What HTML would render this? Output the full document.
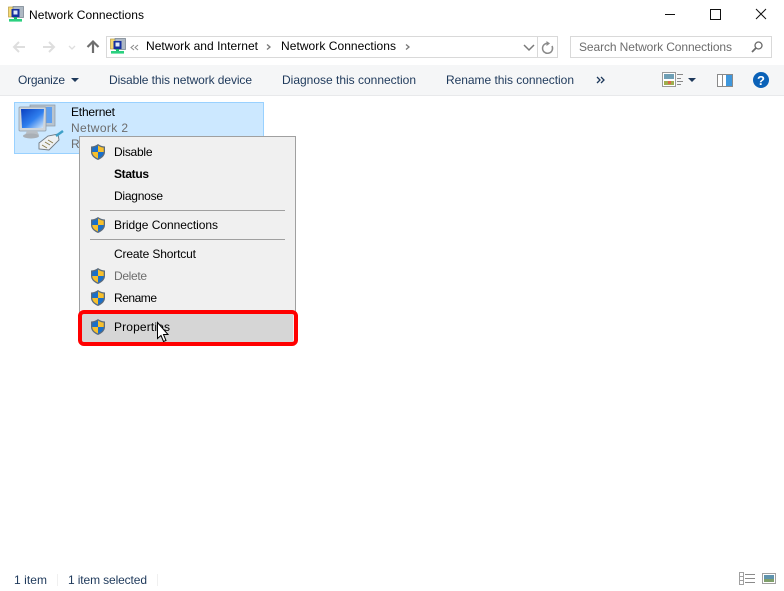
<!DOCTYPE html>
<html><head><meta charset="utf-8"><title>Network Connections</title>
<style>
html,body{margin:0;padding:0;background:#fff;width:784px;height:591px;overflow:hidden}
svg{display:block}
text{font-family:"Liberation Sans",sans-serif;font-size:12px;fill:#000}
.t{fill:#1e395b}
</style></head><body>
<svg width="784" height="591" viewBox="0 0 784 591" xmlns="http://www.w3.org/2000/svg">
<defs>
<linearGradient id="scr" x1="0" y1="0" x2="1" y2="1"><stop offset="0" stop-color="#0a3fc0"/><stop offset=".55" stop-color="#2f7fee"/><stop offset="1" stop-color="#d8ecfc"/></linearGradient>
<g id="shield">
<path d="M7 0C5 1.600 3 2.300 0 2.500V8C0 11.800 3.200 14.500 7 16 10.800 14.500 14 11.800 14 8V2.500C11 2.300 9 1.600 7 0Z" fill="#5b6b7c"/>
<path d="M7 1.500V8H1.300V3.600C3.800 3.400 5.500 2.700 7 1.500Z" fill="#1a6fc9"/>
<path d="M7 1.500C8.500 2.700 10.200 3.400 12.700 3.600V8H7Z" fill="#f7c02c"/>
<path d="M1.300 8H7V14.500C4 13.200 1.300 11.200 1.300 8Z" fill="#f7c02c"/>
<path d="M7 8H12.700C12.700 11.200 10 13.200 7 14.500Z" fill="#1a6fc9"/>
</g>
<g id="net">
<rect x="0.500" y="1" width="7" height="10" fill="#f6d970" stroke="#b59a45" stroke-width=".7"/>
<rect x="5" y="0.500" width="10.500" height="11" fill="#aeb9c4" stroke="#6f7c89" stroke-width=".7"/>
<rect x="3.500" y="3" width="8" height="8" fill="#16309f"/>
<rect x="5.500" y="4.500" width="4" height="4" fill="#dfe8f7"/>
<rect x="6" y="11" width="3" height="2" fill="#1bb56a"/>
<rect x="1" y="13" width="13" height="2.600" fill="#2bd07f"/>
</g>
</defs>

<!-- title bar -->
<use href="#net" x="8" y="6"/>
<text x="29" y="19" textLength="115" lengthAdjust="spacing">Network Connections</text>
<rect x="665" y="14" width="10" height="1" fill="#111"/>
<rect x="710.500" y="9.500" width="10" height="10" fill="none" stroke="#111"/>
<path d="M756 9L766 19M766 9L756 19" stroke="#111" stroke-width="1" fill="none"/>

<!-- nav -->
<path d="M25 47H14M19 42L14 47L19 52" stroke="#dedede" stroke-width="2" fill="none"/>
<path d="M43 47H54M49 42L54 47L49 52" stroke="#dedede" stroke-width="2" fill="none"/>
<path d="M69 46L72 49L75 46" stroke="#dedede" stroke-width="1.300" fill="none"/>
<path d="M93 53V42M87.500 47L93 41.500L98.500 47" stroke="#6e6e6e" stroke-width="2.200" fill="none"/>

<!-- address -->
<rect x="106.500" y="36.500" width="451" height="21" fill="#fff" stroke="#d9d9d9"/>
<rect x="537" y="37" width="1" height="20" fill="#d9d9d9"/>
<use href="#net" x="110" y="38"/>
<path d="M134 45L131 47.500L134 50M138 45L135 47.500L138 50" stroke="#8a8a8a" fill="none"/>
<text x="146" y="50" textLength="112" lengthAdjust="spacing">Network and Internet</text>
<path d="M267 44.500L270 47L267 49.500" stroke="#777" stroke-width="1.300" fill="none"/>
<text x="281" y="50" textLength="115" lengthAdjust="spacing">Network Connections</text>
<path d="M406 44.500L409 47L406 49.500" stroke="#777" stroke-width="1.300" fill="none"/>
<path d="M524 45L529 50L534 45" stroke="#7a7a7a" stroke-width="1.500" fill="none"/>
<path d="M552 46A5 5 0 1 1 549 43.500" stroke="#8a8a8a" stroke-width="1.500" fill="none"/>
<path d="M546.500 41L550 43.500L546.500 46Z" fill="#8a8a8a"/>

<!-- search -->
<rect x="570.500" y="36.500" width="201" height="21" fill="#fff" stroke="#d9d9d9"/>
<text x="579" y="51" textLength="153" lengthAdjust="spacing" style="fill:#6d6d6d">Search Network Connections</text>
<circle cx="758.500" cy="45.500" r="3.500" fill="none" stroke="#6a6a6a" stroke-width="1.300"/>
<path d="M756 48L752 52" stroke="#6a6a6a" stroke-width="1.800"/>

<!-- toolbar -->
<rect x="0" y="65" width="784" height="30" fill="#f5f6f7"/>
<rect x="0" y="95" width="784" height="1" fill="#e8e9eb"/>
<text class="t" x="18" y="84" textLength="47" lengthAdjust="spacing">Organize</text>
<path d="M71 78H79L75 82Z" fill="#1e395b"/>
<text class="t" x="109" y="84" textLength="143" lengthAdjust="spacing">Disable this network device</text>
<text class="t" x="282" y="84" textLength="134" lengthAdjust="spacing">Diagnose this connection</text>
<text class="t" x="446" y="84" textLength="128" lengthAdjust="spacing">Rename this connection</text>
<path d="M597 77L600 80L597 83M601 77L604 80L601 83" stroke="#1e395b" stroke-width="1.300" fill="none"/>
<rect x="662.500" y="72.500" width="13" height="14" fill="#fff" stroke="#9a9a9a"/>
<rect x="664" y="74" width="10" height="5" fill="#6f9fb5"/>
<rect x="664" y="81" width="10" height="4" fill="#9fae4e"/>
<rect x="668" y="81" width="3" height="3" fill="#d9694a"/>
<path d="M677 74.500H683M677 78.500H681M677 81.500H683M677 84.500H681" stroke="#888"/>
<path d="M688 78H696L692 82Z" fill="#1e395b"/>
<rect x="717.500" y="74.500" width="15" height="12" fill="#fff" stroke="#8a8a8a"/>
<rect x="726" y="75" width="6" height="11" fill="#3f97dc"/>
<rect x="722" y="75" width="1" height="11" fill="#8a8a8a"/>
<circle cx="761" cy="80" r="8" fill="#0b62b8"/>
<text x="761" y="85" text-anchor="middle" style="font-size:13px;font-weight:bold;fill:#fff">?</text>

<!-- selected item -->
<rect x="14.500" y="102.500" width="249" height="51" fill="#cce8ff" stroke="#99d1ff"/>
<rect x="30" y="105" width="25" height="21" fill="#b8c4cf" stroke="#8b99a6" stroke-width=".7"/>
<rect x="33" y="107" width="19" height="16" fill="#5e9fee"/>
<rect x="19" y="107" width="27" height="24" rx="1" fill="#cfd6dc" stroke="#8b99a6" stroke-width=".7"/>
<path d="M21 109H44L43 128H22Z" fill="url(#scr)"/>
<path d="M27 131H37L39 135H25Z" fill="#b8bec4"/>
<ellipse cx="31" cy="136" rx="8" ry="2.500" fill="#a9afb5"/>
<path d="M39 143L48 136L58 134L59 140L49 150L39 149Z" fill="#eef1f3" stroke="#6f7982" stroke-width=".9"/>
<path d="M42 145L47 148M45 142L50 145M48 140L53 143" stroke="#8b7d4a"/>
<path d="M56 136L63 131" stroke="#3ea0c8" stroke-width="2.500"/>
<text x="71" y="116" textLength="44" lengthAdjust="spacing">Ethernet</text>
<text x="71" y="132" textLength="57" lengthAdjust="spacing" style="fill:#6d6d6d">Network  2</text>
<text x="71" y="148" style="fill:#6d6d6d">R</text>

<!-- menu -->
<rect x="79.500" y="136.500" width="216" height="206" fill="#f0f0f0" stroke="#a0a0a0"/>
<use href="#shield" x="91" y="144"/>
<text x="114" y="156" textLength="38.500" lengthAdjust="spacing">Disable</text>
<text x="114" y="178" textLength="35" lengthAdjust="spacing" style="font-weight:bold">Status</text>
<text x="114" y="200" textLength="49" lengthAdjust="spacing">Diagnose</text>
<rect x="90" y="210" width="195" height="1" fill="#a0a0a0"/>
<use href="#shield" x="91" y="217"/>
<text x="114" y="229" textLength="104" lengthAdjust="spacing">Bridge Connections</text>
<rect x="90" y="239" width="195" height="1" fill="#a0a0a0"/>
<text x="114" y="258" textLength="82" lengthAdjust="spacing">Create Shortcut</text>
<use href="#shield" x="91" y="268"/>
<text x="114" y="280" textLength="33" lengthAdjust="spacing" style="fill:#6d6d6d">Delete</text>
<use href="#shield" x="91" y="290"/>
<text x="114" y="302" textLength="43" lengthAdjust="spacing">Rename</text>
<rect x="82" y="314" width="211" height="28" fill="#d6d6d6"/>
<use href="#shield" x="91" y="319"/>
<text x="114" y="331" textLength="56" lengthAdjust="spacing">Properties</text>
<rect x="80" y="312" width="216" height="32" rx="4" fill="none" stroke="#ff0000" stroke-width="4"/>
<path d="M157.500 322.500V338.500L161 335.500L163.500 341.500L166 340.500L163.500 334.500L168 334.500Z" fill="#fff" stroke="#000" stroke-width="1"/>

<!-- status bar -->
<text x="14" y="584" textLength="33" lengthAdjust="spacing" class="t">1 item</text>
<text x="68" y="584" textLength="79" lengthAdjust="spacing" class="t">1 item selected</text>
<rect x="57" y="574" width="1" height="12" fill="#f0f0f0"/>
<rect x="157" y="574" width="1" height="12" fill="#f0f0f0"/>
<rect x="739.500" y="572.500" width="4" height="4" fill="#fff" stroke="#a0a0a0"/>
<rect x="739.500" y="576.500" width="4" height="4" fill="#fff" stroke="#a0a0a0"/>
<rect x="739.500" y="580.500" width="4" height="4" fill="#fff" stroke="#a0a0a0"/>
<path d="M745 574.500H755M745 578.500H755M745 582.500H755" stroke="#8a8a8a"/>
<rect x="762.500" y="573.500" width="13" height="10" fill="#fff" stroke="#a0a0a0"/>
<rect x="764" y="575" width="10" height="7" fill="#5f93ad"/>
<rect x="764" y="579" width="10" height="3" fill="#7f9f6a"/>
</svg>
</body></html>
